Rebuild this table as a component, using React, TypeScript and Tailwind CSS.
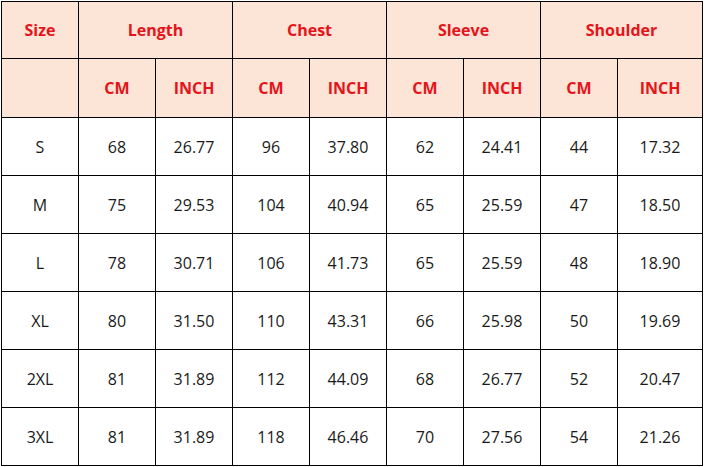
const groups = ["Length", "Chest", "Sleeve", "Shoulder"];

const rows = [
  ["S", "68", "26.77", "96", "37.80", "62", "24.41", "44", "17.32"],
  ["M", "75", "29.53", "104", "40.94", "65", "25.59", "47", "18.50"],
  ["L", "78", "30.71", "106", "41.73", "65", "25.59", "48", "18.90"],
  ["XL", "80", "31.50", "110", "43.31", "66", "25.98", "50", "19.69"],
  ["2XL", "81", "31.89", "112", "44.09", "68", "26.77", "52", "20.47"],
  ["3XL", "81", "31.89", "118", "46.46", "70", "27.56", "54", "21.26"],
];

export default function App() {
  return (
    <div className="w-[704px] h-[467px] bg-white" style={{ fontFamily: '"Open Sans", "Noto Sans", sans-serif' }}>
      <div className="ml-px mt-px inline-grid gap-px p-px bg-black grid-cols-[76px_76px_76px_76px_76px_76px_76px_76px_84px] grid-rows-[56px_58px_57px_57px_57px_57px_57px_57px]">
        <div className="bg-[#fce4d6] flex items-center justify-center text-[16px] font-bold text-[#e5141b]">Size</div>
        {groups.map((g) => (
          <div key={g} className="col-span-2 bg-[#fce4d6] flex items-center justify-center text-[16px] font-bold text-[#e5141b]">
            {g}
          </div>
        ))}
        <div className="bg-[#fce4d6]" />
        {groups.map((g) => [
          <div key={g + "cm"} className="bg-[#fce4d6] flex items-center justify-center text-[16px] font-bold text-[#e5141b]">CM</div>,
          <div key={g + "in"} className="bg-[#fce4d6] flex items-center justify-center text-[16px] font-bold text-[#e5141b]">INCH</div>,
        ])}
        {rows.map((r) =>
          r.map((v, i) => (
            <div key={r[0] + i} className="bg-white flex items-center justify-center text-[16px] text-[#1a1a1a]">
              {v}
            </div>
          ))
        )}
      </div>
    </div>
  );
}
